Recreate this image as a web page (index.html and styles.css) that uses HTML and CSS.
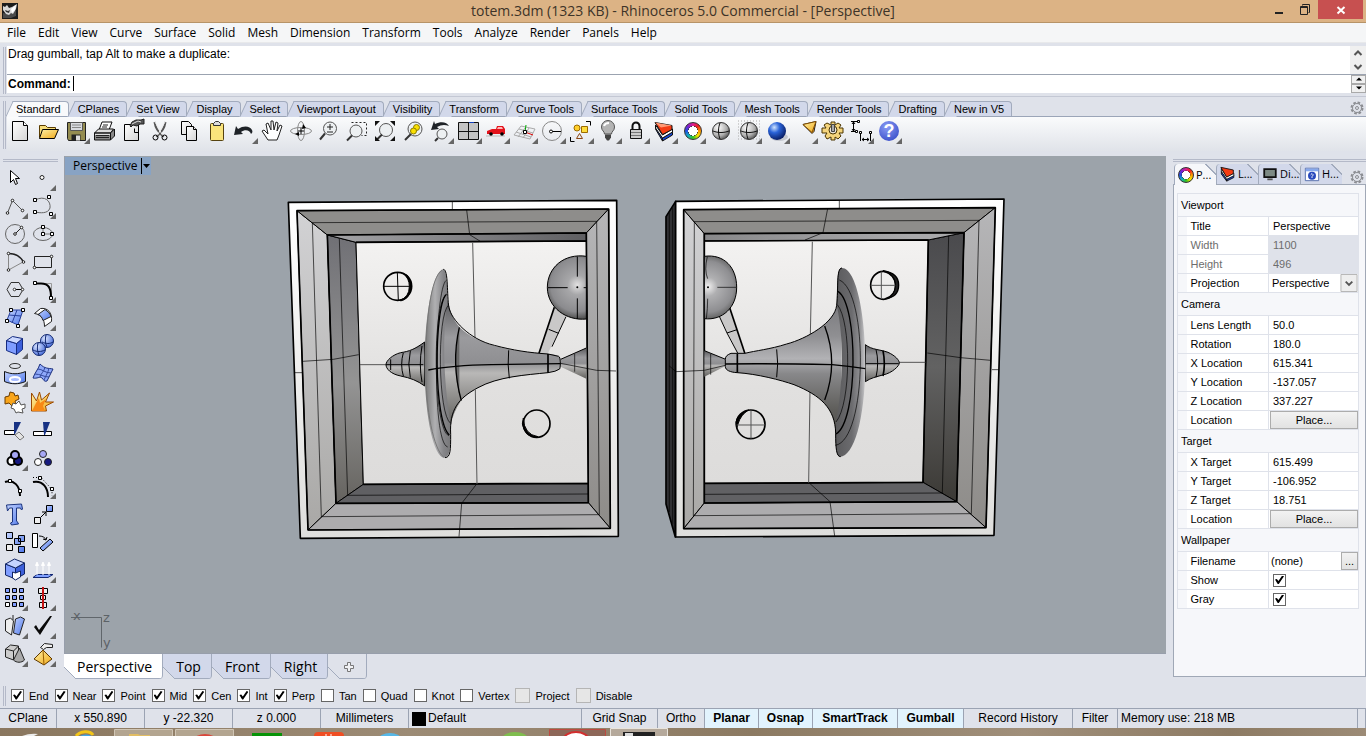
FILE: index.html
```html
<!DOCTYPE html>
<html lang="en">
	<head>
		<meta charset="UTF-8" />
		<meta name="viewport" content="width=device-width, initial-scale=1.0" />
		<title>totem.3dm (1323 KB) - Rhinoceros 5.0 Commercial - [Perspective]</title>
		<link rel="stylesheet" href="styles.css">
	</head>
	<body>
		<!-- Shared gradients -->
		<svg class="defs" width="0" height="0" aria-hidden="true">
			<defs>
				<linearGradient id="blue" x2="1" y2="1"><stop stop-color="#c3d3ff" /><stop offset="1" stop-color="#4f78ea" /></linearGradient>
				<linearGradient id="gold" x2="1" y2="1"><stop stop-color="#fff2a8" /><stop offset="1" stop-color="#f0a818" /></linearGradient>
				<linearGradient id="paper" x2="1" y2="1"><stop stop-color="#fff" /><stop offset="1" stop-color="#d4d4d4" /></linearGradient>
				<radialGradient id="ball" cx=".35" cy=".3" r=".8"><stop stop-color="#fff" /><stop offset=".6" stop-color="#b0b0b0" /><stop offset="1" stop-color="#444" /></radialGradient>
				<radialGradient id="blueball" cx=".35" cy=".3" r=".75"><stop stop-color="#cfe4ff" /><stop offset=".4" stop-color="#2a63d8" /><stop offset="1" stop-color="#06185c" /></radialGradient>
				<radialGradient id="softball" cx=".35" cy=".3" r=".8"><stop stop-color="#dbe6ff" /><stop offset="1" stop-color="#3b62d6" /></radialGradient>
			</defs>
		</svg>

		<header class="titlebar">
			<svg class="app-icon" viewBox="0 0 16 16"><path fill="#1c1c1c" d="M0 0h16v16H0z" /><path fill="#777" d="M1 10l5 1 8-4v6l-5 2H1z" opacity=".5" /><path fill="#d8d8d8" d="M1 3l2 1 2-2 2 3 3-1 5-3-1 5-3 5-2-1-2 2-3-1-3-4z" /><path fill="#333" d="M3 7l3 1 2-1-1 3-3-1z" /><path fill="#fff" d="M9 6l5-4-1 5-3 3z" /></svg>
			<h1>totem.3dm (1323 KB) - Rhinoceros 5.0 Commercial - [Perspective]</h1>
			<div class="window-buttons">
				<button type="button" aria-label="Minimize"><svg viewBox="0 0 12 12"><path d="M2 9h8" stroke="#222" stroke-width="2" /></svg></button>
				<button type="button" aria-label="Restore"><svg viewBox="0 0 12 12" fill="none" stroke="#222"><path d="M3.500 1.500v-1h7v8h-1M1.500 2.500h7v8h-7zM1.500 3.500h7" /></svg></button>
				<button type="button" class="win-close" aria-label="Close"><svg viewBox="0 0 12 12"><path d="M2.500 3l7 6.500m0-6.500l-7 6.500" stroke="#fff" stroke-width="2" /></svg></button>
			</div>
		</header>

		<nav class="menubar">
			<button type="button">File</button>
			<button type="button">Edit</button>
			<button type="button">View</button>
			<button type="button">Curve</button>
			<button type="button">Surface</button>
			<button type="button">Solid</button>
			<button type="button">Mesh</button>
			<button type="button">Dimension</button>
			<button type="button">Transform</button>
			<button type="button">Tools</button>
			<button type="button">Analyze</button>
			<button type="button">Render</button>
			<button type="button">Panels</button>
			<button type="button">Help</button>
		</nav>

		<section class="command">
			<div class="grip"></div>
			<div class="command-box">
				<div class="history">
					<p>Drag gumball, tap Alt to make a duplicate:</p>
					<div class="scroller"><svg viewBox="0 0 16 28" fill="none" stroke="#555" stroke-width="2"><path d="M4.500 9L8 5.500 11.500 9M4.500 19L8 22.500 11.500 19" /></svg></div>
				</div>
				<div class="prompt">
					<label for="cmd">Command:</label>
					<input type="text" id="cmd" />
					<div class="spinner"><button type="button" aria-label="Up"><svg viewBox="0 0 6 4"><path d="M0 3.500h6L3 .5z" /></svg></button><button type="button" aria-label="Down"><svg viewBox="0 0 6 4"><path d="M0 .5h6l-3 3z" /></svg></button></div>
				</div>
			</div>
		</section>

		<section class="tools">
			<div class="grip"></div>
			<div class="tools-main">
				<div class="tabs">
					<button type="button" class="active">Standard</button>
					<button type="button">CPlanes</button>
					<button type="button">Set View</button>
					<button type="button">Display</button>
					<button type="button">Select</button>
					<button type="button">Viewport Layout</button>
					<button type="button">Visibility</button>
					<button type="button">Transform</button>
					<button type="button">Curve Tools</button>
					<button type="button">Surface Tools</button>
					<button type="button">Solid Tools</button>
					<button type="button">Mesh Tools</button>
					<button type="button">Render Tools</button>
					<button type="button">Drafting</button>
					<button type="button">New in V5</button>
					<svg class="cog" viewBox="0 0 14 14" fill="none" stroke="#8b8d92"><circle cx="7" cy="7" r="5.500" stroke-width="2" stroke-dasharray="2.600 1.700" /><circle cx="7" cy="7" r="4.500" /><circle cx="7" cy="7" r="1.500" /></svg>
				</div>
				<div class="toolbar">
					<button type="button" class="tool" title="New"><svg viewBox="0 0 28 28"><path d="M6.500 4.500h11l4 4v15h-15z" fill="url(#paper)" stroke="#000" /><path d="M17.500 4.500v4h4" fill="#fff" stroke="#000" /></svg></button>
					<button type="button" class="tool" title="Open"><svg viewBox="0 0 28 28" stroke="#5a3c00"><path d="M5.500 20.500v-12h6l2 2h8v3" fill="#f6dc78" /><path d="M5.500 21.500l3-9h16l-4 9z" fill="url(#gold)" stroke="#000" /></svg></button>
					<button type="button" class="tool more" title="Save"><svg viewBox="0 0 28 28"><path d="M5.500 5.500h18v18h-17l-1-2z" fill="#948c50" stroke="#222" /><path d="M8.500 5.500h12v8h-12z" fill="#d9dbe0" stroke="#555" /><path d="M10 8h9M10 10.500h9" stroke="#888" /><path d="M9.500 17.500h9v6h-9z" fill="#222" /><path d="M14 18.500h4v5h-4z" fill="#ddd" /></svg></button>
					<button type="button" class="tool" title="Print"><svg viewBox="0 0 28 28" stroke="#111"><path d="M9 13l3-8h10l-3 8z" fill="#fff" /><path d="M4.500 16l4-4h15l-3 4z" fill="#ddd" /><path d="M4.500 16h16v7h-16zM20.500 16l4-4v7l-4 4z" fill="#888" /><path d="M6 18.500h13M6 20.500h13M13 8h5M12 10h5" fill="none" stroke="#222" /><path d="M5 17.500h15" stroke="#ddd" /></svg></button>
					<button type="button" class="tool" title="Properties"><svg viewBox="0 0 28 28"><path d="M6.500 7.500h14v16h-14z" fill="url(#paper)" stroke="#000" /><path d="M16.500 11.500v4h4" fill="none" stroke="#000" /><path d="M12 9l2-4 4-2 5 0 3-1v5h-4l-3 2-4-1-2 2z" fill="#555" stroke="#222" /><path d="M14 7l6-3 3 1" stroke="#ddd" fill="none" /></svg></button>
					<button type="button" class="tool" title="Cut"><svg viewBox="0 0 28 28" fill="none"><path d="M8.500 5c1 6 3 9 9 15M19.500 5c-1 6-3 9-9 15" stroke="#555" stroke-width="2" /><path d="M9 5l8 14M19 5l-8 14" stroke="#eee" /><circle cx="9.500" cy="20.500" r="2.500" stroke="#000" /><circle cx="18.500" cy="20.500" r="2.500" stroke="#000" /></svg></button>
					<button type="button" class="tool" title="Copy"><svg viewBox="0 0 28 28" fill="url(#paper)" stroke="#000"><path d="M7.500 4.500h7l3 3v10h-10z" /><path d="M12.500 9.500h7l3 3v11h-10z" /><path d="M19.500 9.500v3h3" /></svg></button>
					<button type="button" class="tool" title="Paste"><svg viewBox="0 0 28 28"><rect x="8.500" y="6.500" width="13" height="17" rx="1" fill="#fae47c" stroke="#564310" /><path d="M11.500 8.500v-2l2-2h3l2 2v2z" fill="#dcdcdc" stroke="#333" /></svg></button>
					<button type="button" class="tool more" title="Undo"><svg viewBox="0 0 28 28"><path d="M4 18l2-9 2 3c6-4 12-3 14 1 1 2 0 3-1 4-1-4-6-5-10-2l2 2z" fill="#1f2328" /></svg></button>
					<button type="button" class="tool" title="Pan"><svg viewBox="0 0 28 28"><path d="M10 23l-6-9 2-1 4 4-2-10 2-1 3 7V4h2l1 9 2-8 2 1-1 8 3-6 2 1-3 9-2 5z" fill="#fff" stroke="#222" /></svg></button>
					<button type="button" class="tool" title="Rotate view"><svg viewBox="0 0 28 28" fill="none" stroke="#888"><ellipse cx="15" cy="14" rx="10.500" ry="3.500" /><ellipse cx="15" cy="14" rx="3.500" ry="9.500" /><path d="M15 11v6m-3-3h6" stroke="#000" /><path d="M9 17l4-2v4zM17 7l3 4-4 1z" fill="#000" stroke="none" /></svg></button>
					<button type="button" class="tool" title="Zoom dynamic"><svg viewBox="0 0 28 28" fill="none"><circle cx="16" cy="11.500" r="6.500" fill="#edf0f2" stroke="#555" /><path d="M6 22.500l5-6" stroke="#333" stroke-width="2" /><path d="M13 10h6m-3-3v6m-3 2h6" stroke="#222" /></svg></button>
					<button type="button" class="tool" title="Zoom window"><svg viewBox="0 0 28 28" fill="none"><path d="M9.500 5.500h15v13h-5" stroke="#222" stroke-dasharray="2 2" /><circle cx="14" cy="14" r="6" fill="#edf0f2" stroke="#555" /><path d="M5 23.500l5-5" stroke="#333" stroke-width="2" /></svg></button>
					<button type="button" class="tool" title="Zoom extents"><svg viewBox="0 0 28 28" fill="none"><circle cx="16" cy="13" r="6.500" fill="#edf0f2" stroke="#555" /><path d="M7 22.500l5-5" stroke="#333" stroke-width="2" /><path d="M5 4h5l-5 5zM25 4h-5l5 5zM5 24v-5l5 5zM25 24v-5l-5 5z" fill="#111" /></svg></button>
					<button type="button" class="tool" title="Zoom selected"><svg viewBox="0 0 28 28" fill="none"><circle cx="17" cy="12" r="7" fill="#edf0f2" stroke="#555" /><path d="M7 23l6-6" stroke="#333" stroke-width="2" /><circle cx="18.500" cy="10.500" r="3" fill="#fbe000" stroke="#8a7c00" /><circle cx="15.500" cy="14" r="3" fill="#fbe000" stroke="#8a7c00" /></svg></button>
					<button type="button" class="tool more" title="Undo view"><svg viewBox="0 0 28 28" fill="none"><path d="M5 13l3-9 1 3c6-3 12-2 14 2-5-2-8-1-12 1l2 2z" fill="#1f2328" /><circle cx="16" cy="17" r="5" fill="#edf0f2" stroke="#555" /><path d="M9 24l3-3" stroke="#333" stroke-width="2" /></svg></button>
					<button type="button" class="tool more" title="4 view"><svg viewBox="0 0 28 28"><path d="M4.500 5.500h20v17h-20zM14.500 5.500v17M4.500 14.500h20" fill="#c4c4c4" stroke="#111" /><path d="M15 5.500h5" stroke="#123db8" /></svg></button>
					<button type="button" class="tool more" title="Set view"><svg viewBox="0 0 28 28"><path d="M4 19h19" stroke="#bbb" /><path d="M5 17v-3l5-2 4 0 1-3h6l2 3v5z" fill="#e3121b" /><path d="M16 10h4l1 2h-6z" fill="#ffb5b5" /><circle cx="9" cy="17" r="1.800" /><circle cx="20" cy="17" r="1.800" /></svg></button>
					<button type="button" class="tool more" title="Set CPlane"><svg viewBox="0 0 28 28" fill="none" stroke="#aaa"><path d="M4 18l7-9 14 3-5 10zM6 15l15 5M9 12l14 4M8 20l7-9M13 21l6-10" /><path d="M15 15l1-7" stroke="#0a0" /><path d="M15 15l8 3" stroke="#d00" /><path d="M13.500 13.500h3v3h-3z" fill="#fff" stroke="#000" /></svg></button>
					<button type="button" class="tool more" title="Circle"><svg viewBox="0 0 28 28" fill="none"><circle cx="14" cy="14" r="9.500" stroke="#888" /><path d="M13 14.500h10" stroke="#000" /><circle cx="13" cy="14.500" r="1.500" fill="#fff" stroke="#000" /></svg></button>
					<button type="button" class="tool more" title="Select"><svg viewBox="0 0 28 28" fill="none"><path d="M20 4.500h4.500v4M4.500 20v4.500h4" stroke="#000" /><circle cx="11" cy="11" r="3" fill="#ffcf2a" stroke="#9c6b00" /><path d="M15.500 9.500h6v6h-6z" fill="#ffdd3d" stroke="#9c6b00" /><path d="M10.500 21.500l3-5 3 5z" stroke="#8a4512" /></svg></button>
					<button type="button" class="tool more" title="Hide"><svg viewBox="0 0 28 28"><path d="M10.500 17c0-3-3-3-3-7a6.500 6.500 0 0 1 13 0c0 4-3 4-3 7z" fill="#b4b4b4" stroke="#555" /><path d="M10 9c1-3 3-3 5-3" stroke="#fff" stroke-width="2" fill="none" /><path d="M11 17.500h6v3l-2 3h-2l-2-3z" fill="#444" /></svg></button>
					<button type="button" class="tool more" title="Lock"><svg viewBox="0 0 28 28"><path d="M10.500 13V9a3.500 3.500 0 0 1 7 0v4" fill="none" stroke="#111" stroke-width="2" /><path d="M8.500 12.500h11v9h-11z" fill="#ccc" stroke="#111" /><path d="M9 15.500h10M9 18.500h10" stroke="#777" /></svg></button>
					<button type="button" class="tool more" title="Layers"><svg viewBox="0 0 28 28" stroke="#111"><path d="M5.500 10l7 11v3l-7-12zM12.500 21l10-6v3l-10 6z" fill="#1646d2" /><path d="M5.500 8l7 10 10-6v3l-10 6-7-10z" fill="#fff" /><path d="M5 5.500l17 3v4l-9.500 5z" fill="#f43c14" /><path d="M5 5.500l6 5 11-2z" fill="#ff9a76" stroke="none" /></svg></button>
					<button type="button" class="tool more" title="Object properties"><span class="wheel"></span></button>
					<button type="button" class="tool" title="Shade"><svg viewBox="0 0 28 28" fill="none"><circle cx="15" cy="14" r="8.500" fill="url(#ball)" stroke="#333" /><path d="M14 6c-2 5-2 11 0 16M7 14c5 2 11 2 16 0" stroke="#111" /></svg></button>
					<button type="button" class="tool more" title="Shade selected"><svg viewBox="0 0 28 28" fill="none"><path d="M4 4h22M4 7h22M4 10h22M4 13h22M4 16h22M4 19h22M4 22h22" stroke="#aaa" stroke-dasharray="1 2" /><circle cx="15" cy="14" r="8.500" fill="url(#ball)" stroke="#333" /><path d="M14 6c-2 5-2 11 0 16M7 14c5 2 11 2 16 0" stroke="#111" /></svg></button>
					<button type="button" class="tool more" title="Render"><svg viewBox="0 0 28 28"><ellipse cx="17" cy="20" rx="9" ry="4" fill="#c4c7cf" /><circle cx="15" cy="14" r="9" fill="url(#blueball)" /></svg></button>
					<button type="button" class="tool more" title="Lights"><svg viewBox="0 0 28 28" stroke-linejoin="round"><path d="M13 7.500l13-3-2 10-2 2z" fill="#f6a623" stroke="#222" /><path d="M13 7.500l13-3-4 11z" fill="url(#gold)" stroke="#844e00" /></svg></button>
					<button type="button" class="tool more" title="Options"><svg viewBox="0 0 28 28"><path d="M13 5h4v3l3-2 3 2-2 3h4v5h-4l2 3-3 3-3-2v3h-4v-3l-4 2-2-3 2-3H4v-5h4l-2-3 3-2 4 2z" fill="#f4d47c" stroke="#4a3400" /><circle cx="15" cy="13" r="4" fill="#ece7da" stroke="#4a3400" /><path d="M13.500 7.500h3v7h-3z" fill="#aaa" stroke="#444" /></svg></button>
					<button type="button" class="tool more" title="Dimension"><svg viewBox="0 0 28 28" fill="none" stroke="#000"><path d="M5 4.500h8M5 14.500h5M7.500 5v9M6 7l1.500-2L9 7M6 12l1.500 2L9 12M14.500 16v8M24.500 16v8M16 22.500h7M18 21l-2 1.500 2 1.500M21 21l2 1.500-2 1.500" /><path fill="#fff" d="M11.500 3.500h2v2h-2zM9.500 13.500h2v2h-2zM13.500 14.500h2v2h-2zM23.500 14.500h2v2h-2z" /></svg></button>
					<button type="button" class="tool more help" title="Help"><span>?</span></button>
				</div>
			</div>
		</section>

		<main class="workspace">
			<aside class="sidebar">
				<div class="hgrip"></div>
				<div class="palette">
					<button type="button" class="tool" title="Select"><svg viewBox="0 0 28 28"><path d="M10.500 6.500v12l3-3 2 5 2-1-2-5h4z" fill="#fff" stroke="#000" /></svg></button>
					<button type="button" class="tool more" title="Point"><svg viewBox="0 0 28 28"><circle cx="14" cy="13.500" r="2" fill="#fff" stroke="#222" /></svg></button>
					<button type="button" class="tool more" title="Polyline"><svg viewBox="0 0 28 28" fill="#fff" stroke="#222"><path d="M7.500 21l5-12.500 10 10" fill="none" stroke="#555" /><circle cx="7.500" cy="21" r="1.300" /><circle cx="12.500" cy="8.500" r="1.300" /><circle cx="22.500" cy="18.500" r="1.300" /></svg></button>
					<button type="button" class="tool more" title="Curve"><svg viewBox="0 0 28 28" fill="#fff" stroke="#000"><path d="M7 8c10-5 16 1 15 8-2 6-10 5-15 4" fill="none" stroke="#666" /><path d="M5.500 6.500h3v3h-3zM19.500 3.500h3v3h-3zM5.500 18.500h3v3h-3zM21.500 20.500h3v3h-3z" /></svg></button>
					<button type="button" class="tool more" title="Circle"><svg viewBox="0 0 28 28" fill="#fff" stroke="#222"><circle cx="15" cy="14" r="9.500" fill="none" stroke="#666" /><path d="M15 14l6-6" /><circle cx="15" cy="14" r="1.300" /><circle cx="21.500" cy="7.500" r="1.300" /></svg></button>
					<button type="button" class="tool more" title="Ellipse"><svg viewBox="0 0 28 28" fill="#fff" stroke="#000"><ellipse cx="15" cy="14" rx="9.500" ry="6.500" fill="none" stroke="#666" /><path d="M15 14h9M15 14V7" stroke="#777" /><path d="M13.500 12.500h3v3h-3zM13.500 5.500h3v3h-3zM22.500 12.500h3v3h-3z" /></svg></button>
					<button type="button" class="tool more" title="Arc"><svg viewBox="0 0 28 28" fill="#fff" stroke="#222"><path d="M23 14L8.500 22V5.500" fill="none" stroke="#888" /><path d="M8.500 5.500c7 0 12 3 15 8.500" fill="none" stroke-width="1.500" /><circle cx="8.500" cy="5.500" r="1.300" /><circle cx="8.500" cy="22" r="1.300" /><circle cx="23.500" cy="14" r="1.300" /></svg></button>
					<button type="button" class="tool more" title="Rectangle"><svg viewBox="0 0 28 28" fill="#fff" stroke="#222"><path d="M6.500 8.500h17v11h-17z" fill="none" /><circle cx="6.500" cy="19.500" r="1.300" /><circle cx="23.500" cy="8.500" r="1.300" /></svg></button>
					<button type="button" class="tool more" title="Polygon"><svg viewBox="0 0 28 28" fill="#fff" stroke="#333"><path d="M7 13.500l4-7h8l4 7-4 7h-8z" fill="none" /><path d="M14.500 13.500h8" stroke="#000" /><circle cx="14.500" cy="13.500" r="1.300" /><circle cx="22.500" cy="13.500" r="1.300" /></svg></button>
					<button type="button" class="tool more" title="Fillet"><svg viewBox="0 0 28 28" fill="#fff" stroke="#000"><path d="M7 7.500h16.500V22" fill="none" stroke="#999" /><path d="M7 7.500h6c8 0 10 5 10 14" fill="none" stroke-width="2" /><path d="M5.500 5.500h3v3h-3zM21.500 20.500h3v3h-3z" /></svg></button>
					<button type="button" class="tool more" title="Surface"><svg viewBox="0 0 28 28" fill="#fff" stroke="#000"><path d="M11 6h12l-5 15-11-5z" fill="url(#blue)" stroke="#28409c" /><path d="M17 6l-5 13M9 11l12 1" stroke="#28409c" /><path d="M9.500 4.500h3v3h-3zM21.500 4.500h3v3h-3zM5.500 15.500h3v3h-3zM16.500 20.500h3v3h-3z" /></svg></button>
					<button type="button" class="tool more" title="Sweep"><svg viewBox="0 0 28 28" stroke="#222"><path d="M6.500 9.500l6-5c7-1 12 4 11 13l-7 5c0-7-3-12-10-13z" fill="#fff" /><path d="M10 10.500l7-5c3 2 5 4 6 7l-8 4c-1-3-2-5-5-6z" fill="url(#blue)" /></svg></button>
					<button type="button" class="tool more" title="Box"><svg viewBox="0 0 28 28" stroke="#152b80" stroke-linejoin="round"><path d="M6.500 8.500l10 3v11l-10-4z" fill="#7f9dff" /><path d="M16.500 11.500l6-5v11l-6 5z" fill="#3c5fda" /><path d="M6.500 8.500l6-4 10 2-6 5z" fill="#cbd8ff" /></svg></button>
					<button type="button" class="tool more" title="Boolean"><svg viewBox="0 0 28 28" fill="none" stroke="#122870"><circle cx="19" cy="9" r="6.500" fill="url(#softball)" /><circle cx="11" cy="17" r="6.500" fill="url(#softball)" /><path d="M5 18c4 2 8 2 12 0M10 11c-1 4-1 8 1 12M14 10c4 2 8 2 11 0M18 3c-1 4-1 8 1 12" /></svg></button>
					<button type="button" class="tool more" title="Project"><svg viewBox="0 0 28 28"><ellipse cx="15" cy="6" rx="5.500" ry="2.500" fill="none" stroke="#333" /><path d="M4.500 11.500c7 3 14 3 21 0v10c-7 3-14 3-21 0z" fill="url(#blue)" stroke="#111" /><ellipse cx="15" cy="19.500" rx="5" ry="2.500" fill="#a9bcff" stroke="#fff" stroke-width="2" /></svg></button>
					<button type="button" class="tool more" title="Mesh"><svg viewBox="0 0 28 28" fill="none" stroke="#33489c"><path d="M5 18c4 1 7-2 9 0s2 4 5 3l6-12c-5-1-8 0-13-5-2 6-5 8-7 14z" fill="#8fa9fa" stroke="#1b2f7c" /><path d="M17 7c-1 5-4 6-5 10M21 8c-1 5-3 7-5 12M10 9c4 0 7 4 13 4M7 14c5 0 9 3 14 3" /></svg></button>
					<button type="button" class="tool" title="Join"><svg viewBox="0 0 28 28"><path d="M5 9l4-1 1-4 4 1 1 3 3-1 1 4-4 2 1 4-4 1-3-3-4 1z" fill="#f9a51a" stroke="#6b3c00" /><path d="M13 15l3 1 3-3 2 4 4-1v4l-3 1 1 4-5-1-2 1-2-4-3-1z" fill="#fff" stroke="#555" /></svg></button>
					<button type="button" class="tool" title="Explode"><svg viewBox="0 0 28 28"><path d="M3.500 5l5 8 3-9 2 8 8-7-4 9h8l-8 4 1 5H3.500z" fill="url(#gold)" stroke="#9c4a00" /><path d="M4 23l4-8 3-5 1 5 6-4-3 7 2 5z" fill="#f78916" /></svg></button>
					<button type="button" class="tool" title="Trim"><svg viewBox="0 0 28 28"><path d="M4.500 14.500h10v4h-10z" fill="#fff" stroke="#000" /><path d="M15 19l4-3 5 5-4 3z" fill="#e4e4e4" stroke="#777" /><path d="M14 6h7l-6 12h-1z" fill="#173284" /></svg></button>
					<button type="button" class="tool" title="Split"><svg viewBox="0 0 28 28"><path d="M5.500 15.500h18v4h-18z" fill="#fff" stroke="#000" /><path d="M15 6h7l-5 13h-1z" fill="#173284" /></svg></button>
					<button type="button" class="tool more" title="Group"><svg viewBox="0 0 28 28" stroke="#000" stroke-width="2"><circle cx="11.500" cy="17" r="4" fill="#fff" /><circle cx="18" cy="17" r="4" fill="#171a80" /><circle cx="15" cy="11" r="4" fill="#a6a7f5" /></svg></button>
					<button type="button" class="tool" title="Ungroup"><svg viewBox="0 0 28 28" stroke="#222"><circle cx="10" cy="18" r="3.500" fill="#fff" /><circle cx="20" cy="18" r="3.500" fill="#171a80" /><circle cx="15" cy="10" r="3.500" fill="#a6a7f5" /></svg></button>
					<button type="button" class="tool" title="Edit points"><svg viewBox="0 0 28 28" fill="#fff" stroke="#000"><path d="M5 10c9-3 15 4 15 14" fill="none" stroke-width="2" /><path d="M8.500 7.500h3v3h-3zM18.500 17.500h3v3h-3z" /></svg></button>
					<button type="button" class="tool more" title="Control points"><svg viewBox="0 0 28 28" fill="#fff" stroke="#000"><path d="M5 10c10-2 15 6 15 15" fill="none" stroke-width="2" /><path d="M5 5.500h8l11 12v6" fill="none" stroke-dasharray="1 2" /><path d="M10.500 4.500h3v3h-3zM22.500 15.500h3v3h-3z" /></svg></button>
					<button type="button" class="tool" title="Text"><svg viewBox="0 0 28 28"><path d="M6.500 5l1 6 2-3h3v14l-2 1 1 2 7-1-1-2-1-1V8l4 0 1 2 1-1-1-5z" fill="url(#blue)" stroke="#1b347e" /></svg></button>
					<button type="button" class="tool more" title="Move"><svg viewBox="0 0 28 28" stroke="#000"><path d="M6.500 17.500h6v6h-6z" fill="#eee" /><path d="M18.500 5.500h6v6h-6z" fill="url(#blue)" /><path d="M13 17l5-5m-4 0h4v4" fill="none" /></svg></button>
					<button type="button" class="tool" title="Copy"><svg viewBox="0 0 28 28" fill="url(#blue)" stroke="#000"><path d="M6.500 4.500h6v6h-6zM18.500 7.500h6v6h-6zM14.500 10.500h6v6h-6zM18.500 18.500h6v6h-6z" /><path d="M6.500 16.500h6v6h-6z" fill="#eee" /></svg></button>
					<button type="button" class="tool" title="Rotate"><svg viewBox="0 0 28 28" stroke="#000"><path d="M4.500 5.500h5v14h-5z" fill="#fff" /><path d="M12 20l10-9 3 3-10 9z" fill="url(#blue)" /><path d="M11 8c3 0 6 1 7 4m-3-1l3 1 1-3" fill="none" /></svg></button>
					<button type="button" class="tool more" title="Solid edit"><svg viewBox="0 0 28 28" stroke="#102464" stroke-linejoin="round"><path d="M5.500 8l10 4v11l-10-4z" fill="#7f9dff" /><path d="M15.500 12l9-5v11l-9 5z" fill="#3c5fda" /><path d="M5.500 8l9-5 10 4-9 5z" fill="#c4d3ff" /><path d="M12.500 16l3 1 5-2v6l-5 3-3-2z" fill="#fff" /></svg></button>
					<button type="button" class="tool more" title="Extrude"><svg viewBox="0 0 28 28"><path d="M5 21.500l4-3h16l-5 3z" fill="#80a0ff" stroke="#112774" /><path d="M9 19V7M15 19V7M21 19V7M7.500 9.500L9 6l1.500 3.500zM13.500 9.500L15 6l1.500 3.500zM19.500 9.500L21 6l1.500 3.500z" fill="#fff" stroke="#fff" /></svg></button>
					<button type="button" class="tool more" title="Array"><svg viewBox="0 0 28 28" fill="#7f9cff" stroke="#000"><path d="M5.500 4.500h4v4h-4zM12.500 4.500h4v4h-4zM19.500 4.500h4v4h-4zM5.500 11.500h4v4h-4zM12.500 11.500h4v4h-4zM19.500 11.500h4v4h-4zM12.500 18.500h4v4h-4zM19.500 18.500h4v4h-4z" /><path d="M5.500 18.500h4v4h-4z" fill="#fff" /></svg></button>
					<button type="button" class="tool more" title="Align"><svg viewBox="0 0 28 28" fill="#eee" stroke="#000"><path d="M10.500 4.500h9v5h-9zM12.500 11.500h5v4h-5zM11.500 18.500h7v5h-7z" /><path d="M15 3v22" stroke="#c41414" stroke-width="2" /></svg></button>
					<button type="button" class="tool more" title="Bend"><svg viewBox="0 0 28 28" stroke="#222"><path d="M5.500 8l5-2 3 3-2 14-6-4z" fill="#eee" /><path d="M15.500 7l5-2 4 2-5 16-6-2z" fill="url(#blue)" /><path d="M13 3v5" /></svg></button>
					<button type="button" class="tool more" title="Check"><svg viewBox="0 0 28 28"><path d="M6 15l2-2 3 5L22 4l2 0L12 23z" fill="#0a0a0a" /></svg></button>
					<button type="button" class="tool more" title="Shapes"><svg viewBox="0 0 28 28" stroke="#222"><path d="M5.500 9l5-4 8 1v9l-5 5-8-3z" fill="#ccc" /><path d="M5.500 9l8 2v9M13.500 11l5-5" fill="none" /><path d="M13.500 20l6-12 5 12c-3 3-8 3-11 0z" fill="#aaa" /></svg></button>
					<button type="button" class="tool more" title="Pyramid"><svg viewBox="0 0 28 28"><path d="M6 19l9-9 9 9-8 6z" fill="url(#gold)" stroke="#5d3700" /><path d="M15 10l1 15" stroke="#9a5e00" /><path d="M12.500 7.500l4-4 8 1v3h-6l-3 2z" fill="#eee" stroke="#222" /></svg></button>
				</div>
			</aside>

			<div class="stage">
				<div class="viewport">
					<svg class="scene" viewBox="65 156 1101 497">
						<defs>
							<linearGradient id="rim" x2="0" y2="1"><stop stop-color="#fff" /><stop offset="1" stop-color="#dededc" /></linearGradient>
							<linearGradient id="floor" x2="0" y2="1"><stop stop-color="#f3f2f1" /><stop offset=".6" stop-color="#e1e0df" /><stop offset="1" stop-color="#dddcdb" /></linearGradient>
							<linearGradient id="bevel" x2="0" y2="1"><stop stop-color="#d2d2d4" /><stop offset="1" stop-color="#a9a8a6" /></linearGradient>
							<linearGradient id="bevelR" x2="0" y2="1"><stop stop-color="#b6b6b8" /><stop offset="1" stop-color="#8d8b88" /></linearGradient>
							<linearGradient id="wall" x2="0" y2="1"><stop stop-color="#707075" /><stop offset=".55" stop-color="#949494" /><stop offset="1" stop-color="#65635f" /></linearGradient>
							<linearGradient id="wallR" x2="0" y2="1"><stop stop-color="#4a4a4d" /><stop offset=".5" stop-color="#626262" /><stop offset="1" stop-color="#3b3935" /></linearGradient>
							<linearGradient id="ceil"><stop stop-color="#a5a5a8" /><stop offset="1" stop-color="#5f5f62" /></linearGradient>
							<linearGradient id="ceilR"><stop stop-color="#88888a" /><stop offset=".8" stop-color="#a9a9ab" /></linearGradient>
							<linearGradient id="horn" x2="0" y2="1"><stop stop-color="#59595c" /><stop offset=".3" stop-color="#9b9b9e" /><stop offset=".5" stop-color="#8f8f92" /><stop offset=".58" stop-color="#b9b8b7" /><stop offset=".75" stop-color="#949391" /><stop offset="1" stop-color="#62615e" /></linearGradient>
							<linearGradient id="hornR" x2="0" y2="1"><stop stop-color="#66666a" /><stop offset=".36" stop-color="#8f8f92" /><stop offset=".48" stop-color="#b2b2b5" /><stop offset=".56" stop-color="#88888a" /><stop offset=".75" stop-color="#5f5e5b" /><stop offset="1" stop-color="#444340" /></linearGradient>
							<linearGradient id="disc"><stop stop-color="#777" /><stop offset=".3" stop-color="#b0b0b2" /><stop offset=".55" stop-color="#858588" /><stop offset="1" stop-color="#666" /></linearGradient>
							<linearGradient id="discR"><stop stop-color="#5a5a5c" /><stop offset=".55" stop-color="#6b6b6e" /><stop offset=".8" stop-color="#8d8d90" /><stop offset="1" stop-color="#c9c9cb" /></linearGradient>
							<radialGradient id="orb" gradientUnits="userSpaceOnUse" cx="892" cy="285" r="100"><stop stop-color="#e3e2e2" /><stop offset=".3" stop-color="#a7a7a9" /><stop offset=".8" stop-color="#8b8b8e" /><stop offset="1" stop-color="#555" /></radialGradient>
							<radialGradient id="orbR" gradientUnits="userSpaceOnUse" cx="174" cy="290" r="95"><stop stop-color="#f1f0f0" /><stop offset=".3" stop-color="#b0b0b2" /><stop offset=".8" stop-color="#8e8e91" /><stop offset="1" stop-color="#666" /></radialGradient>
						</defs>

						<!-- Left mould half -->
						<g transform="translate(280 190) scale(.33333)" fill="none" stroke="#000" stroke-width="3" stroke-linejoin="round">
							<path d="M25 37l985-6 5 1008-954 6z" fill="url(#rim)" stroke-width="5" />
							<path d="M51 62l91 73 26 805-84 80z" fill="url(#bevel)" />
							<path d="M51 62l935-5-67 72-777 6z" fill="#8e8d8b" />
							<path d="M986 57l-67 72 6 809 66 77z" fill="url(#bevelR)" />
							<path d="M168 940l757-2 66 77-907 5z" fill="#adacae" />
							<path d="M142 135l86 22 22 726-82 57z" fill="url(#wall)" />
							<path d="M142 135l777-6v24l-691 4z" fill="url(#ceil)" />
							<path d="M250 883l675-3v58l-757 2z" fill="#606063" />
							<path d="M228 157l691-4 6 727-675 3z" fill="url(#floor)" />
							<path d="M51 62l935-5 5 958-907 5zM142 135l777-6 6 809-757 2zM228 157l691-4M250 883l675-3" stroke-width="5" />
							<path d="M97 98l853-4 8 880-834 6zM178 147l25 769 722-4M517 36v22M560 60l9 74 32 20M45 548l22 0M68 514l92-6 76-14M537 1040l8-100 45-58M950 541l58 2" stroke-width="2" />
							<path d="M578 158l7 285M586 600l5 282M240 524h80" stroke="#555" />
							<ellipse cx="353" cy="289" rx="42" ry="42" stroke-width="5" />
							<path d="M382 256q24 32 0 66q-16 14-24 9q30-8 30-42q0-24-18-38z" fill="#000" />
							<path d="M311 289h84M352 247l3 84" />
							<ellipse cx="770" cy="701" rx="40" ry="41" stroke-width="5" />
							<path d="M730 684q2 50 44 56q-38 6-47-38z" fill="#000" />
							<path d="M823 352l38 20-60 124-24-4z" fill="#c9c8c8" stroke="none" /><path d="M823 352l-46 138" stroke-width="5" /><path d="M806 418l30 12M858 380l-42 90" />
							<path d="M919 199v188c-60 6-116-34-117-94 0-60 50-104 117-94z" fill="url(#orb)" />
							<path d="M892 200v60m0 65v62M803 293h60m48 0h8" /><circle cx="892" cy="292" r="3" fill="#000" stroke="none" />
							<path d="M842 508l77-34v92l-77-36z" fill="url(#horn)" stroke="none" /><path d="M842 508l77-34" /><path d="M842 520l108 21M884 492v53" stroke-width="2" />
							<path d="M434 456c-30 22-46 28-72 32-24 6-44 24-44 36s14 28 44 34c30 6 50 14 72 30z" fill="url(#horn)" />
							<path d="M370 488q-10 36 0 70M391 483q-9 38 0 80M426 468q-10 56 0 108M332 508v32M318 524h112" />
							<path d="M503 330c10 80 60 110 130 134 60 18 110 22 171 28 20 0 36 6 38 14v26c-2 8-16 14-38 16-70 8-140 12-200 40-52 26-90 60-92 120z" fill="url(#horn)" stroke="none" />
							<path d="M490 238c10 0 12 50 14 110 4 30 20 50 34 66v216c-20 30-28 60-27 100 0 50-2 72-18 73-32-2-58-120-59-270-1-170 28-294 56-295z" fill="url(#disc)" stroke="none" />
							<path d="M503 330c8 36 18 62 35 82q-25 108 4 222c-16 24-26 48-29 70-18-100-30-250-10-374z" fill="url(#horn)" stroke="none" />
							<path d="M486 241c-34 20-49 155-49 288s24 250 55 273" stroke="#777" />
							<path d="M490 238c16 0 10 80 17 115s60 95 136 113c56 15 104 22 161 26l32 7c6 2 6 30 3 38q-11 8-35 11c-68 7-150 12-210 45-60 32-86 67-82 140 0 45 0 70-17 70" />
							<path d="M499 271c-34 20-46 486 4 500M501 312c-46 20-42 410 6 425M506 345c-36 30-32 330 6 355" stroke-width="2" />
							<path d="M498 314c-36 40-38 380 10 421M538 412q-25 108 6 220" stroke-width="4" />
							<path d="M804 492v56" stroke-width="5" /><path d="M686 481q-4 45 2 84" />
							<path d="M445 540q70-14 190-16l207-3" stroke-width="4" />
						</g>

						<!-- Right mould half -->
						<g transform="translate(650 190) scale(.33333)" fill="none" stroke="#000" stroke-width="3" stroke-linejoin="round">
							<path d="M77 34L48 80v862l28 99z" fill="#303033" stroke-width="5" />
							<path d="M58 66v900M68 52v950" stroke="#111" />
							<path d="M77 34l985-7-30 1009-955 5z" fill="url(#rim)" stroke-width="5" />
							<path d="M101 59l62 72v808l-62 77z" fill="url(#bevel)" />
							<path d="M101 59l935-6-94 75-779 3z" fill="#8e8d8b" />
							<path d="M1036 53l-94 75-22 807 88 78z" fill="url(#bevelR)" />
							<path d="M163 939l757-4 88 78-907 3z" fill="#adacae" />
							<path d="M942 128l-107 22-16 727 101 58z" fill="url(#wallR)" />
							<path d="M163 131l779-3-107 22-672 3z" fill="url(#ceilR)" />
							<path d="M163 880l656-3 101 58-757 4z" fill="#616164" />
							<path d="M163 153l672-3-16 727-656 3z" fill="url(#floor)" />
							<path d="M101 59l935-6-28 960-907 3zM163 131l779-3-22 807-757 4zM163 153l672-3-16 727-656 3" stroke-width="5" />
							<path d="M133 95l854-4-23 880-834 6zM896 137l-19 772-714 4M568 32v22M533 56l-14 72-54 22M479 880l61 55 14 103M1026 539h20M832 489l100 14 90 8M58 528l20 17 85-4" stroke-width="2" />
							<path d="M487 155l-6 280M480 600l-4 278M748 517h78" stroke="#555" />
							<ellipse cx="700" cy="286" rx="38" ry="42" stroke-width="5" />
							<path d="M700 243q46 6 46 42 0 36-40 41 30-8 30-40 0-32-36-43z" fill="#222" stroke-width="4" />
							<path d="M662 286h74M694 245v82" stroke="#555" />
							<ellipse cx="302" cy="703" rx="43" ry="43" stroke-width="5" />
							<path d="M260 715q-12-40 36-55-24 14-32 42z" fill="#000" /><path d="M260 705h84M303 662v84" stroke="#555" />
							<path d="M207 377l32-24 46 138-20 2z" fill="#c9c8c8" stroke="none" /><path d="M239 353l46 138" stroke-width="5" /><path d="M207 377l24 52 30-10M231 429l34 64" />
							<path d="M163 199c60-8 97 34 97 93 0 60-42 100-97 94z" fill="url(#orbR)" />
							<path d="M172 200q-10 40 1 66m0 60q0 30-4 60M202 292h58" stroke-width="2" /><circle cx="174" cy="292" r="3" fill="#000" stroke="none" />
							<path d="M163 482l64 26v20l-64 32z" fill="url(#horn)" stroke="none" /><path d="M163 482l64 26" /><path d="M226 526l-63 15M182 492v62" stroke-width="2" />
							<path d="M646 464c20 16 44 14 68 23 22 10 34 24 34 32s-20 30-50 36c-20 6-34 8-52 20z" fill="url(#horn)" />
							<path d="M678 478q10 40 0 84M646 521h100" /><path d="M699 482q8 40 0 76" stroke-width="5" />
							<path d="M576 234c-18 0-10 60-16 112s-90 100-150 116c-50 16-94 20-125 28h-42c-10 4-17 8-17 18v22c0 10 14 17 36 18 60 4 130 22 170 36 80 32 124 72 125 146 0 45 2 70 15 70z" fill="url(#hornR)" stroke="none" />
							<path d="M576 234c44 0 72 150 70 295-2 160-34 271-76 271-12 0-13-36-14-90 20-100 30-250 4-364 2-76 1-112 16-112z" fill="url(#discR)" stroke="none" />
							<path d="M576 234c-18 0-10 60-16 112s-90 100-150 116c-50 16-94 20-125 28h-42c-10 4-17 8-17 18v22c0 10 14 17 36 18 60 4 130 22 170 36 80 32 124 72 125 146 0 45 2 70 15 70" />
							<path d="M568 270c88 36 84 480-12 496M562 344c42 50 42 296-4 352" stroke-width="2" />
							<path d="M564 304c62 40 60 390-6 428M524 408q42 110 0 222" stroke-width="4" />
							<path d="M262 492v56" stroke-width="5" /><path d="M380 478q6 44 0 84" />
							<path d="M226 522q130-2 320 2 50 4 100 12" stroke-width="4" />
						</g>

						<!-- World axes -->
						<path d="M71 617.500h30.500v30" fill="none" stroke="#60666b" />
						<g class="axis"><text x="73" y="620">x</text><text x="103" y="622">z</text><text x="103" y="647">y</text></g>
					</svg>
					<button type="button" class="view-title"><span>Perspective</span><svg viewBox="0 0 10 16"><path d="M1 0h1v16H1zM3 6h7l-3.500 4z" /></svg></button>
				</div>
				<div class="view-tabs">
					<button type="button" class="active">Perspective</button>
					<button type="button">Top</button>
					<button type="button">Front</button>
					<button type="button">Right</button>
					<button type="button" class="add" aria-label="New viewport"><svg viewBox="0 0 10 10"><path d="M3.500.5h3v3h3v3h-3v3h-3v-3h-3v-3h3z" fill="#f0f1f4" stroke="#777" /></svg></button>
				</div>
			</div>

			<aside class="panel">
				<div class="hgrip"></div>
				<div class="panel-tabs">
					<button type="button" class="active"><span class="wheel"></span>P...</button>
					<button type="button"><svg viewBox="0 0 18 18" stroke="#111"><path d="M1.500 6l6 8v3l-6-8zM7.500 14l8-4v3l-8 4z" fill="#1646d2" /><path d="M1.500 3l6 9 8-4v3l-8 4-6-9z" fill="#fff" /><path d="M1 1.500l14 3v4l-7.500 4z" fill="#f43c14" /></svg>L...</button>
					<button type="button"><svg viewBox="0 0 18 18"><path d="M2.500 3.500h13v9h-13z" fill="#7d8a84" stroke="#111" stroke-width="2" /><path d="M6 14h6v2H6z" fill="#555" /></svg>Di...</button>
					<button type="button"><svg viewBox="0 0 18 18"><path d="M1.500 2.500h15v14h-15z" fill="#fff" stroke="#4c66a8" /><path d="M2 3h14v3H2z" fill="#88a9ec" /><circle cx="9" cy="11" r="4.500" fill="#2849bd" /><path d="M7.500 10q1.500-3 3 0l-1.500 2v1.500" stroke="#fff" fill="none" /></svg>H...</button>
					<svg class="cog" viewBox="0 0 14 14" fill="none" stroke="#8b8d92"><circle cx="7" cy="7" r="5.500" stroke-width="2" stroke-dasharray="2.600 1.700" /><circle cx="7" cy="7" r="4.500" /><circle cx="7" cy="7" r="1.500" /></svg>
				</div>
				<div class="panel-body">
					<table class="props">
						<colgroup><col class="indent"><col class="name"><col></colgroup>
						<tr><th colspan="3">Viewport</th></tr>
						<tr><td></td><td><label for="title">Title</label></td><td><input id="title" type="text" value="Perspective" /></td></tr>
						<tr class="off"><td></td><td><label for="width">Width</label></td><td><input id="width" type="text" value="1100" disabled /></td></tr>
						<tr class="off"><td></td><td><label for="height">Height</label></td><td><input id="height" type="text" value="496" disabled /></td></tr>
						<tr><td></td><td><label for="projection">Projection</label></td><td><div class="pick"><select id="projection"><option>Perspective</option><option>Parallel</option></select><svg viewBox="0 0 18 19"><path d="M.5.5h17v18H.5z" fill="#eee" stroke="#b2b2b2" /><path d="M5.500 8L9 11.500 12.500 8" fill="none" stroke="#555" stroke-width="2" /></svg></div></td></tr>
						<tr><th colspan="3">Camera</th></tr>
						<tr><td></td><td><label for="lens">Lens Length</label></td><td><input id="lens" type="text" value="50.0" /></td></tr>
						<tr><td></td><td><label for="rotation">Rotation</label></td><td><input id="rotation" type="text" value="180.0" /></td></tr>
						<tr><td></td><td><label for="xloc">X Location</label></td><td><input id="xloc" type="text" value="615.341" /></td></tr>
						<tr><td></td><td><label for="yloc">Y Location</label></td><td><input id="yloc" type="text" value="-137.057" /></td></tr>
						<tr><td></td><td><label for="zloc">Z Location</label></td><td><input id="zloc" type="text" value="337.227" /></td></tr>
						<tr><td></td><td><label for="camplace">Location</label></td><td><button type="button" class="place" id="camplace">Place...</button></td></tr>
						<tr><th colspan="3">Target</th></tr>
						<tr><td></td><td><label for="xtar">X Target</label></td><td><input id="xtar" type="text" value="615.499" /></td></tr>
						<tr><td></td><td><label for="ytar">Y Target</label></td><td><input id="ytar" type="text" value="-106.952" /></td></tr>
						<tr><td></td><td><label for="ztar">Z Target</label></td><td><input id="ztar" type="text" value="18.751" /></td></tr>
						<tr><td></td><td><label for="tarplace">Location</label></td><td><button type="button" class="place" id="tarplace">Place...</button></td></tr>
						<tr><th colspan="3">Wallpaper</th></tr>
						<tr><td></td><td><label for="file">Filename</label></td><td><div class="file"><span>(none)</span><button type="button" id="file">...</button></div></td></tr>
						<tr><td></td><td><label for="show">Show</label></td><td><input type="checkbox" id="show" checked /></td></tr>
						<tr><td></td><td><label for="gray">Gray</label></td><td><input type="checkbox" id="gray" checked /></td></tr>
					</table>
				</div>
			</aside>
		</main>

		<section class="osnap">
			<div class="grip"></div>
			<label><input type="checkbox" checked />End</label>
			<label><input type="checkbox" checked />Near</label>
			<label><input type="checkbox" checked />Point</label>
			<label><input type="checkbox" checked />Mid</label>
			<label><input type="checkbox" checked />Cen</label>
			<label><input type="checkbox" checked />Int</label>
			<label><input type="checkbox" checked />Perp</label>
			<label><input type="checkbox" />Tan</label>
			<label><input type="checkbox" />Quad</label>
			<label><input type="checkbox" />Knot</label>
			<label><input type="checkbox" />Vertex</label>
			<label><input type="checkbox" class="flat" />Project</label>
			<label><input type="checkbox" class="flat" />Disable</label>
		</section>

		<footer class="statusbar">
			<button type="button">CPlane</button>
			<span>x 550.890</span>
			<span>y -22.320</span>
			<span>z 0.000</span>
			<button type="button">Millimeters</button>
			<button type="button" class="layer"><i></i>Default</button>
			<button type="button">Grid Snap</button>
			<button type="button">Ortho</button>
			<button type="button" class="on">Planar</button>
			<button type="button" class="on">Osnap</button>
			<button type="button" class="on">SmartTrack</button>
			<button type="button" class="on">Gumball</button>
			<button type="button">Record History</button>
			<button type="button">Filter</button>
			<span class="memory">Memory use: 218 MB</span>
			<span></span>
		</footer>

		<div class="taskbar">
			<svg viewBox="0 0 1366 8" preserveAspectRatio="xMinYMin slice">
				<path d="M114.500 9v-7.500h58V9M175.500 9v-7.500h58V9" fill="#b3a590" stroke="#d0c5b4" />
				<path d="M22 8q8-3 16-2l-4 2z" fill="#eee" /><path d="M76 8c4-5 14-6 17-1" stroke="#f3c518" stroke-width="3" fill="none" /><path d="M80 8q6-3 12 0z" fill="#41a8e8" />
				<path d="M129 8V6h9l2 1h10v1z" fill="#e2bd63" /><ellipse cx="205" cy="12" rx="11" ry="6" fill="#d9473b" />
				<path d="M252 5h30v3h-30z" fill="#079307" /><rect x="314" y="4" width="30" height="9" rx="4" fill="#f04e23" /><path d="M326 8V6m5 0v2" stroke="#fff" />
				<ellipse cx="390" cy="11" rx="11" ry="6" fill="#56b8e8" /><ellipse cx="515" cy="11" rx="13" ry="7" fill="#7fbd4e" />
				<path d="M549.500 9V1.500h56V9" fill="#8d6758" stroke="#bd4a40" /><ellipse cx="576" cy="11" rx="12" ry="7" fill="#fff" stroke="#d22f2f" stroke-width="2" />
				<path d="M610.500 9V.5h57V9" fill="#b5a99b" stroke="#e9e4dc" /><path d="M623 4h32v4h-32z" fill="#222" /><path d="M625 5h8v3h-8z" fill="#ddd" />
			</svg>
		</div>
	</body>
</html>
```
FILE: styles.css
```css
* {
	box-sizing: border-box;
}

body {
	margin: 0;
	height: 100vh;
	display: flex;
	flex-direction: column;
	overflow: hidden;
	background: #dfe2ea;
	color: #000;
	font-family: "Liberation Sans", Arial, sans-serif;
	font-size: 11px;
	line-height: 14px;
}

button, input, select {
	font: inherit;
	color: inherit;
	margin: 0;
	padding: 0;
	border: 0;
	background: none;
	border-radius: 0;
}

.defs {
	position: absolute;
}

/* Title bar */
.titlebar {
	display: grid;
	grid-template-columns: 1fr auto 1fr;
	height: 23px;
	background: #dcb385;
	border-bottom: 1px solid #b79468;
}

.app-icon {
	width: 16px;
	height: 16px;
	margin: 3px 2px;
}

.titlebar h1 {
	margin: 0;
	font: 14px/22px "Open Sans", sans-serif;
	color: #3d3328;
}

.window-buttons {
	display: flex;
	justify-content: flex-end;
	padding-right: 3px;
}

.window-buttons button {
	width: 26px;
	height: 19px;
}

.window-buttons svg {
	display: block;
	width: 12px;
	height: 12px;
	margin: auto;
}

.window-buttons .win-close {
	width: 45px;
	background: #c75050;
}

/* Menu */
.menubar {
	display: flex;
	height: 20px;
	padding-left: 1px;
	background: #f5f6f7;
	border-bottom: 1px solid #e8e9eb;
}

.menubar button {
	padding: 0 6px;
	font: 12px/19px "Open Sans", sans-serif;
}

/* Command line */
.command {
	display: flex;
	padding-top: 3px;
	height: 54px;
	border-bottom: 1px solid #c4c8d4;
}

.grip {
	width: 3px;
	margin: 1px 1px 2px 3px;
	border-left: 1px solid #b4b9c8;
	border-right: 1px solid #b4b9c8;
}

.command-box {
	flex: 1;
	margin-bottom: 3px;
	background: #fff;
}

.history {
	display: flex;
	height: 29px;
	border-bottom: 1px solid #9ba3b0;
	font-size: 12px;
}

.history p {
	flex: 1;
	margin: 1px;
}

.scroller {
	width: 16px;
	background: #f0f0f0;
}

.scroller svg {
	display: block;
}

.prompt {
	display: flex;
	align-items: center;
	height: 17px;
	font-size: 12px;
}

.prompt label {
	margin: 0 2px 0 1px;
	font-weight: bold;
}

.prompt input {
	flex: 1;
	height: 15px;
	border-left: 1px solid #000;
}

.spinner {
	width: 15px;
	display: grid;
}

.spinner button {
	display: grid;
	place-items: center;
	height: 9px;
	border: 1px solid #a9a9a9;
	background: #f0f0f0;
}

.spinner svg {
	width: 6px;
	height: 4px;
}

/* Toolbars */
.tools {
	display: flex;
	height: 54px;
	padding-top: 3px;
}

.tools-main {
	flex: 1;
}

.tabs {
	display: flex;
	isolation: isolate;
	height: 17px;
	border-bottom: 1px solid #9ba5b8;
	padding-top: 1px;
}

.tabs button {
	position: relative;
	height: 15px;
	margin-left: 7px;
	padding: 0 7px 0 2px;
	background: #d2d8ea;
	border: 1px solid #a2abbd;
	border-width: 1px 1px 0 0;
	border-radius: 0 4px 0 0;
	line-height: 14px;
	white-space: nowrap;
}

/* slanted leading edge */
.tabs button::before {
	content: "";
	position: absolute;
	z-index: -1;
	left: -5px;
	top: -1px;
	width: 12px;
	height: 15px;
	background: inherit;
	border: 1px solid #a2abbd;
	border-width: 1px 0 0 1px;
	transform: skewX(-25deg);
}

.tabs .active {
	background: #f8f9fb;
}

.cog {
	width: 14px;
	height: 14px;
	margin-left: auto;
	margin-right: 2px;
}

.toolbar {
	display: flex;
	height: 34px;
	background: linear-gradient(#fafbfc, #e0e3e9);
}

.tool {
	position: relative;
	width: 28px;
	height: 28px;
	display: block;
}

.toolbar .tool:first-child {
	margin-left: -1px;
}

.tool svg {
	display: block;
	width: 28px;
	height: 28px;
}

.more::after {
	content: "";
	position: absolute;
	right: 0;
	bottom: 1px;
	border: 3px solid #666;
	border-top-color: transparent;
	border-left-color: transparent;
}

.wheel {
	display: inline-block;
	width: 18px;
	height: 18px;
	border: 1px solid #333;
	border-radius: 50%;
	background: radial-gradient(#fff 40%, #333 41%, transparent 48%), conic-gradient(#e0208f, #f02020, #ff9a00, #f5e600, #30c020, #10b0c0, #2050e0, #8020d0, #e0208f);
}

.tool .wheel {
	display: block;
	margin: 5px 6px;
}

.help span {
	display: block;
	width: 20px;
	height: 20px;
	margin: 4px 5px;
	border-radius: 50%;
	background: radial-gradient(circle at 40% 30%, #8a9cf5, #2a3fc0);
	color: #fff;
	font-size: 18px;
	line-height: 20px;
	font-weight: bold;
}

/* Workspace */
.workspace {
	flex: 1;
	min-height: 0;
	display: flex;
	padding-top: 5px;
}

.sidebar {
	width: 64px;
}

.hgrip {
	height: 3px;
	margin: 3px 6px 2px 3px;
	border-top: 1px solid #b4b9c8;
	border-bottom: 1px solid #b4b9c8;
}

.palette {
	display: grid;
	grid-template-columns: 28px 28px;
}

.stage {
	flex: 1;
	min-width: 0;
	display: flex;
	flex-direction: column;
	padding-bottom: 4px;
}

.viewport {
	flex: 1;
	min-height: 0;
	position: relative;
	background: #9ca3aa;
	border: 1px solid #979eab;
	border-width: 0 0 1px 1px;
}

.scene {
	display: block;
	width: 100%;
	height: 100%;
}

.axis {
	font: 13px "DejaVu Sans", sans-serif;
	fill: #5c6267;
}

.view-title {
	position: absolute;
	left: 0;
	top: 1px;
	display: flex;
	align-items: center;
	gap: 3px;
	height: 18px;
	padding: 0 1px 0 8px;
	background: #88a3c4;
	font: 12px/18px "Open Sans", sans-serif;
}

.view-title svg {
	width: 10px;
	height: 16px;
}

.view-tabs {
	display: flex;
	height: 25px;
}

.view-tabs button {
	padding: 0 10px 0 13px;
	font: 14px/24px "Open Sans", sans-serif;
	border-right: 1px solid #a2abbd;
	border-radius: 0 0 4px 0;
	background: linear-gradient(#a2abbd, #a2abbd) right bottom / calc(100% - 12px) 1px no-repeat, linear-gradient(45deg, transparent 8px, #a2abbd 8px 9px, #d2d8ea 9px);
}

.view-tabs .active {
	background: linear-gradient(#a2abbd, #a2abbd) right bottom / calc(100% - 12px) 1px no-repeat, linear-gradient(45deg, transparent 8px, #a2abbd 8px 9px, #fff 9px);
}

.view-tabs .add {
	padding: 0 12px 0 16px;
	background: linear-gradient(#a2abbd, #a2abbd) right bottom / calc(100% - 12px) 1px no-repeat, linear-gradient(45deg, transparent 8px, #a2abbd 8px 9px, #dfe2ea 9px);
}

.view-tabs svg {
	display: block;
	width: 10px;
	height: 10px;
}

/* Properties panel */
.panel {
	width: 193px;
	margin: 0 0 6px 7px;
	display: flex;
	flex-direction: column;
}

.panel .hgrip {
	margin: 3px 0 2px;
}

.panel-tabs {
	display: flex;
	height: 21px;
	padding-left: 1px;
	border-bottom: 1px solid #a0a8b6;
}

.panel-tabs button {
	display: flex;
	align-items: center;
	gap: 2px;
	flex: 0 0 42px;
	padding-left: 3px;
	background: linear-gradient(225deg, transparent 7px, #a2abbd 7px 8px, #d2d8ea 8px);
	border-left: 1px solid #a2abbd;
	border-radius: 4px 0 0 0;
	font: 11px/18px "Open Sans", sans-serif;
}

.panel-tabs .active {
	height: 21px;
	background: linear-gradient(225deg, transparent 7px, #a2abbd 7px 8px, #f6f7fa 8px);
}

.panel-tabs button svg,
.panel-tabs .wheel {
	flex: none;
	width: 16px;
	height: 16px;
}

.panel-tabs .cog {
	align-self: flex-end;
	margin-right: 2px;
}

.panel-body {
	flex: 1;
	padding: 8px 3px 6px;
	background: #f6f7fa;
	border: 1px solid #a0a8b6;
	border-top: 0;
}

.props {
	width: 182px;
	table-layout: fixed;
	border-collapse: collapse;
}

.props .indent {
	width: 9px;
}

.props .name {
	width: 82px;
}

.props th {
	height: 23px;
	padding: 0 3px;
	text-align: left;
	font-weight: normal;
	border: 1px solid #dfe2ea;
}

.props td {
	height: 19px;
	padding: 0;
	background: #fff;
	border: 1px solid #dfe2ea;
}

.props td:first-child {
	background: #f6f7fa;
	border-right: 0;
}

.props td:nth-child(2) {
	padding-left: 4px;
	border-left: 0;
}

.props input[type="text"] {
	display: block;
	width: 100%;
	height: 18px;
	padding-left: 4px;
}

.props input[type="checkbox"] {
	display: block;
	margin-left: 4px;
}

.props .off {
	color: #6d6d6d;
}

.props .off td:last-child {
	background: #dfe2ea;
}

.pick {
	position: relative;
}

.pick select {
	display: block;
	appearance: none;
	width: 100%;
	height: 18px;
	padding-left: 3px;
}

.pick svg {
	position: absolute;
	right: 0;
	top: 0;
	width: 18px;
	height: 18px;
	pointer-events: none;
}

.place, .file button {
	display: block;
	height: 18px;
	background: linear-gradient(#f2f2f2, #e2e2e2);
	border: 1px solid #acacac;
}

.place {
	width: calc(100% - 1px);
	margin-left: 1px;
}

.file {
	display: flex;
	align-items: center;
	justify-content: space-between;
	padding-left: 2px;
}

.file button {
	width: 17px;
}

input[type="checkbox"] {
	appearance: none;
	width: 13px;
	height: 13px;
	border: 1px solid #666;
	background: #fff;
}

input[type="checkbox"]:checked::before {
	content: "";
	display: block;
	width: 9px;
	height: 9px;
	margin: 1px;
	background: #000;
	clip-path: polygon(0 45%, 20% 40%, 38% 60%, 80% 0, 100% 8%, 42% 95%, 30% 95%);
}

/* Object snaps */
.osnap {
	display: flex;
	align-items: center;
	height: 25px;
}

.osnap .grip {
	align-self: stretch;
	margin: 3px 5px 2px 3px;
}

.osnap label {
	display: flex;
	align-items: center;
	gap: 5px;
	margin-right: 6px;
}

.osnap input.flat {
	width: 15px;
	height: 15px;
	border-color: #b5b5b5;
	background: #e6e6e6;
}

/* Status bar */
.statusbar {
	display: grid;
	grid-template-columns: 57px repeat(4, 88px) 173px 76px 47px 54px 54px 85px 66px 109px 45px 1fr 8px;
	height: 20px;
	border-top: 1px solid #9ba3b3;
	font-size: 12px;
	line-height: 19px;
}

.statusbar > * {
	border-right: 1px solid #9ba3b3;
	text-align: center;
	white-space: nowrap;
}

.statusbar .on {
	background: #e2f3fd;
	font-weight: bold;
}

.statusbar .layer {
	display: flex;
	align-items: center;
	gap: 2px;
	padding-left: 3px;
}

.layer i {
	width: 14px;
	height: 14px;
	background: #000;
}

.statusbar .memory {
	padding-left: 3px;
	text-align: left;
}

.taskbar {
	height: 8px;
	overflow: hidden;
	background: linear-gradient(90deg, #8a775f, #9c8b75 30%, #8c7a62 55%, #a08f7a 75%, #8d7b64 90%, #9c8b76);
}

.taskbar svg {
	display: block;
	width: 100%;
	height: 8px;
}
```
